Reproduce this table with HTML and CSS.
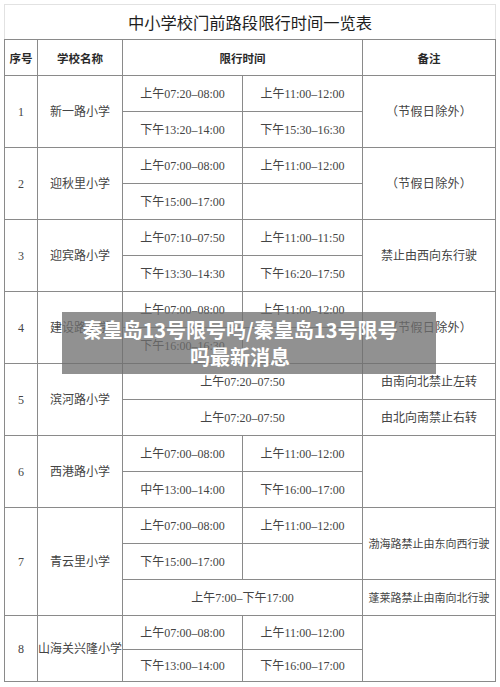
FILE: index.html
```html
<!DOCTYPE html>
<html lang="zh-CN">
<head>
<meta charset="utf-8">
<title>中小学校门前路段限行时间一览表</title>
<link rel="stylesheet" href="styles.css">
</head>
<body>
<div class="page">
  <table class="grid">
    <colgroup>
      <col class="c-no"><col class="c-name"><col class="c-time"><col class="c-time"><col class="c-note">
    </colgroup>
    <tr class="r-title"><td colspan="5" class="title">中小学校门前路段限行时间一览表</td></tr>
    <tr class="r-head"><th>序号</th><th>学校名称</th><th colspan="2">限行时间</th><th>备注</th></tr>

    <tr><td rowspan="2">1</td><td rowspan="2">新一路小学</td><td>上午07:20–08:00</td><td>上午11:00–12:00</td><td rowspan="2" class="paren">（节假日除外）</td></tr>
    <tr><td>下午13:20–14:00</td><td>下午15:30–16:30</td></tr>

    <tr><td rowspan="2">2</td><td rowspan="2">迎秋里小学</td><td>上午07:00–08:00</td><td>上午11:00–12:00</td><td rowspan="2" class="paren">（节假日除外）</td></tr>
    <tr><td>下午15:00–17:00</td><td></td></tr>

    <tr><td rowspan="2">3</td><td rowspan="2">迎宾路小学</td><td>上午07:10–07:50</td><td>上午11:00–11:50</td><td rowspan="2">禁止由西向东行驶</td></tr>
    <tr><td>下午13:30–14:30</td><td>下午16:20–17:50</td></tr>

    <tr><td rowspan="2">4</td><td rowspan="2">建设路小学</td><td>上午07:00–08:00</td><td>上午11:00–12:00</td><td rowspan="2" class="paren">（节假日除外）</td></tr>
    <tr><td>下午16:00–16:30</td><td></td></tr>

    <tr><td rowspan="2">5</td><td rowspan="2">滨河路小学</td><td colspan="2">上午07:20–07:50</td><td>由南向北禁止左转</td></tr>
    <tr><td colspan="2">上午07:20–07:50</td><td>由北向南禁止右转</td></tr>

    <tr><td rowspan="2">6</td><td rowspan="2">西港路小学</td><td>上午07:00–08:00</td><td>上午11:00–12:00</td><td rowspan="2"></td></tr>
    <tr><td>中午13:00–14:00</td><td>下午16:00–17:00</td></tr>

    <tr><td rowspan="3">7</td><td rowspan="3">青云里小学</td><td>上午07:00–08:00</td><td>上午11:00–12:00</td><td rowspan="2" class="small">渤海路禁止由东向西行驶</td></tr>
    <tr><td>下午15:00–17:00</td><td></td></tr>
    <tr><td colspan="2">上午7:00–下午17:00</td><td class="small">蓬莱路禁止由南向北行驶</td></tr>

    <tr class="r-a"><td rowspan="2">8</td><td rowspan="2" class="tight">山海关兴隆小学</td><td>上午07:00–08:00</td><td>上午11:00–12:00</td><td rowspan="2"></td></tr>
    <tr class="r-b"><td>下午13:00–14:00</td><td>下午16:00–17:00</td></tr>
  </table>

  <div class="banner">秦皇岛13号限号吗/秦皇岛13号限号<br>吗最新消息</div>
</div>
</body>
</html>
```

FILE: styles.css
```css
html, body {
  margin: 0;
  padding: 0;
  background: #ffffff;
}

.page {
  position: relative;
  width: 500px;
  height: 687px;
  padding: 4px 0 0 4px;
  box-sizing: border-box;
  overflow: hidden;
}

.grid {
  border-collapse: collapse;
  table-layout: fixed;
  width: 491px;
  font-family: "Liberation Serif", "Noto Sans CJK SC", serif;
  font-size: 12px;
  color: #444444;
}

.c-no { width: 33px; }
.c-name { width: 85px; }
.c-time { width: 120px; }
.c-note { width: 133px; }

.grid td, .grid th {
  border: 1px solid #8a8a8a;
  padding: 0;
  height: 35px;
  text-align: center;
  vertical-align: middle;
  white-space: nowrap;
  line-height: 14px;
}

.grid .r-title td {
  height: 34px;
  border-top-color: #e2e2e2;
  border-left-color: #e2e2e2;
  border-right-color: #e2e2e2;
}

.title {
  font-family: "Noto Sans CJK SC", sans-serif;
  font-size: 16.3px;
  color: #1e1e1e;
  letter-spacing: 0;
}

.r-head th {
  font-family: "Noto Sans CJK SC", sans-serif;
  font-weight: bold;
  font-size: 11.5px;
  color: #2a2a2a;
}

.paren {
  letter-spacing: 0.3px;
}

.small {
  font-size: 11px;
}

.grid td.tight {
  overflow: visible;
}

.grid .r-a td { height: 33px; }
.grid .r-b td { height: 31px; }

.banner {
  position: absolute;
  left: 62px;
  top: 312px;
  width: 374px;
  height: 62px;
  box-sizing: border-box;
  padding: 4px 18px 0 0;
  background: rgba(110, 110, 110, 0.76);
  color: #ffffff;
  font-family: "Noto Sans CJK SC", sans-serif;
  font-weight: bold;
  font-size: 20px;
  line-height: 27px;
  text-align: center;
  white-space: nowrap;
}
```
